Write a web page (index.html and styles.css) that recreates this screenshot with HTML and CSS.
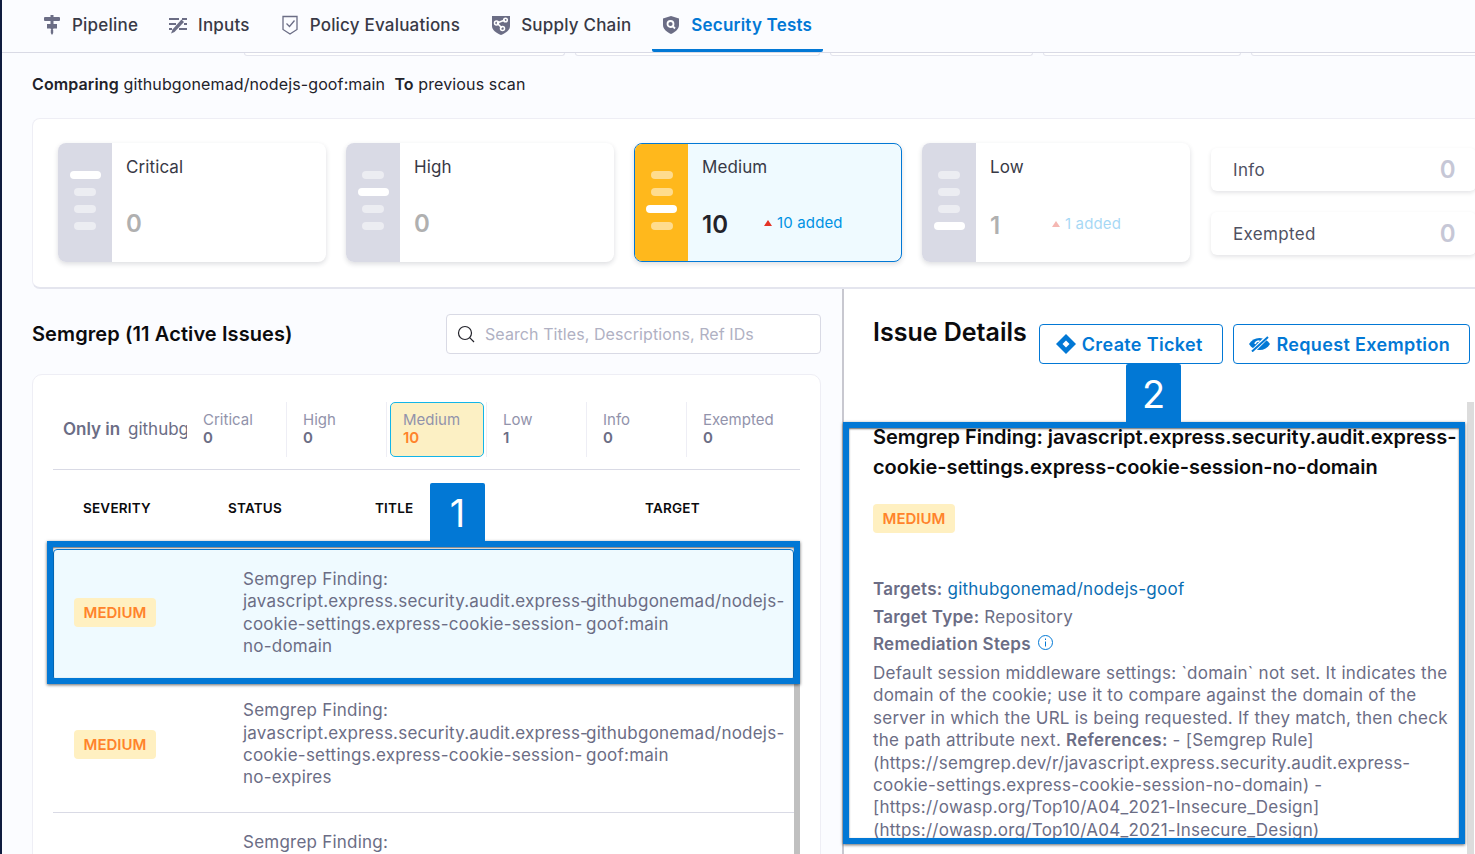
FILE: index.html
```html
<!DOCTYPE html>
<html lang="en">
<head>
<meta charset="UTF-8">
<meta name="viewport" content="width=device-width, initial-scale=1.0">
<link rel="stylesheet" href="styles.css">
<title>Security Tests</title>
</head>
<body>
<div class="page">

  <div class="nav">
    <a class="tab tab-pipeline">
      <svg width="16" height="20" viewBox="0 0 16 20"><path d="M6.500 0h3v2H15a1 1 0 0 1 1 1v2a1 1 0 0 1-1 1H9.500v3H13v4.500H9.500L8 16l-1.500-2.500H3V9h3.500V6H1a1 1 0 0 1-1-1V3a1 1 0 0 1 1-1h5.500z" fill="#6b6d85"/><path d="M6.800 15h2.400v3L8 20l-1.200-2z" fill="#6b6d85"/></svg>
      Pipeline
    </a>
    <a class="tab tab-inputs">
      <svg width="20" height="18" viewBox="0 0 20 18" fill="none" stroke="#6b6d85" stroke-width="2"><path d="M1 3h10M1 8h7M1 13h3"/><path d="M14 3h5M16 8h3M11 13h8"/><path d="M3 17.500l3.500-1.500L16 6l-2.500-2.500-8.800 9.800z" fill="#6b6d85" stroke="none"/></svg>
      Inputs
    </a>
    <a class="tab tab-policy">
      <svg width="16" height="20" viewBox="0 0 16 20" fill="none" stroke="#6b6d85" stroke-width="1.300"><path d="M1 1.500h14v13L8 19l-7-4.500z"/><path d="M4.500 8.500l3 3 5-6"/></svg>
      Policy Evaluations
    </a>
    <a class="tab tab-supply">
      <svg width="20" height="20" viewBox="0 0 20 20"><path d="M1 1h18v10c0 4-4 7-9 9-5-2-9-5-9-9z" fill="#6b6d85"/><g fill="none" stroke="#fff" stroke-width="1.500"><path d="M6 8l8-3M6 8l5 5"/><circle cx="5.500" cy="8" r="2"/><circle cx="14.500" cy="5" r="1.800"/><circle cx="11.500" cy="13.500" r="2"/></g></svg>
      Supply Chain
    </a>
    <a class="tab tab-active">
      <svg width="16" height="18" viewBox="0 0 16 18"><path d="M8 0l8 2.500V9c0 4-3.500 7-8 9-4.500-2-8-5-8-9V2.500z" fill="#6b6d85"/><circle cx="7.500" cy="8" r="3" fill="none" stroke="#fff" stroke-width="1.800"/><path d="M10 10.500l2 2" stroke="#fff" stroke-width="1.800"/></svg>
      Security Tests
    </a>
  </div>

  <div class="peek">
    <span style="width:321px"></span>
    <span style="width:245px"></span>
    <span style="width:203px"></span>
    <span style="width:198px"></span>
    <span style="width:240px"></span>
  </div>

  <p class="compare"><b>Comparing</b> githubgonemad/nodejs-goof:main &nbsp;<b>To</b> previous scan</p>

  <div class="summary">
    <div class="sev-card">
      <div class="stripe"><i class="on"></i><i></i><i></i><i></i></div>
      <div class="sev-body">
        <div class="sev-name">Critical</div>
        <div class="sev-count"><span class="num">0</span></div>
      </div>
    </div>
    <div class="sev-card">
      <div class="stripe"><i></i><i class="on"></i><i></i><i></i></div>
      <div class="sev-body">
        <div class="sev-name">High</div>
        <div class="sev-count"><span class="num">0</span></div>
      </div>
    </div>
    <div class="sev-card selected">
      <div class="stripe"><i></i><i></i><i class="on"></i><i></i></div>
      <div class="sev-body">
        <div class="sev-name">Medium</div>
        <div class="sev-count"><span class="num">10</span><span class="added"><em></em>10 added</span></div>
      </div>
    </div>
    <div class="sev-card">
      <div class="stripe"><i></i><i></i><i></i><i class="on"></i></div>
      <div class="sev-body">
        <div class="sev-name">Low</div>
        <div class="sev-count"><span class="num">1</span><span class="added faded"><em></em>1 added</span></div>
      </div>
    </div>
    <div class="mini-cards">
      <div class="mini"><span>Info</span><b>0</b></div>
      <div class="mini"><span>Exempted</span><b>0</b></div>
    </div>
  </div>

  <div class="split">
    <div class="left">
      <div class="left-head">
        <h2>Semgrep (11 Active Issues)</h2>
        <div class="search">
          <svg width="18" height="18" viewBox="0 0 18 18" fill="none" stroke="#22222a" stroke-width="1.200"><circle cx="8" cy="8" r="6.500"/><path d="M12.700 12.700L17 17"/></svg>
          <span>Search Titles, Descriptions, Ref IDs</span>
        </div>
      </div>

      <div class="issues">
        <div class="filters">
          <div class="only"><b>Only in</b> githubgonemad/nodejs-goof:main</div>
          <div class="cell"><span>Critical</span><b>0</b></div>
          <div class="cell"><span>High</span><b>0</b></div>
          <div class="cell active"><span>Medium</span><b>10</b></div>
          <div class="cell"><span>Low</span><b>1</b></div>
          <div class="cell"><span>Info</span><b>0</b></div>
          <div class="cell last"><span>Exempted</span><b>0</b></div>
        </div>

        <div class="thead">
          <span>Severity</span>
          <span>Status</span>
          <span>Title</span>
          <span>Target</span>
        </div>

        <div class="row current">
          <span class="badge">MEDIUM</span>
          <div>Semgrep Finding: javascript.express.security.audit.express-cookie-settings.express-cookie-session-no-domain</div>
          <div>githubgonemad/nodejs-goof:main</div>
        </div>
        <div class="row">
          <span class="badge">MEDIUM</span>
          <div>Semgrep Finding: javascript.express.security.audit.express-cookie-settings.express-cookie-session-no-expires</div>
          <div>githubgonemad/nodejs-goof:main</div>
        </div>
        <div class="row">
          <span class="badge">MEDIUM</span>
          <div>Semgrep Finding: javascript.express.security.audit.express-cookie-settings.express-cookie-session-no-httponly</div>
          <div>githubgonemad/nodejs-goof:main</div>
        </div>
      </div>
    </div>

    <div class="right">
      <div class="right-head">
        <h1>Issue Details</h1>
        <a class="btn btn-ticket">
          <svg width="20" height="20" viewBox="0 0 20 20"><path d="M10 0l10 10-10 10L0 10z" fill="#0278d5"/><path d="M10 6.500l3.500 3.500-3.500 3.500L6.500 10z" fill="#fff"/></svg>
          Create Ticket
        </a>
        <a class="btn btn-exempt">
          <svg width="21" height="16" viewBox="0 0 21 16"><path d="M0 8c2.500-4 6-6 10.500-6S18.500 4 21 8c-2.500 4-6 6-10.500 6S2.500 12 0 8z" fill="#0278d5"/><path d="M6 8c.5-2 2.300-3 4.500-3" stroke="#fff" stroke-width="1.600" fill="none"/><path d="M3 16L19 0" stroke="#fff" stroke-width="4"/><path d="M3 15.500L19 1" stroke="#0278d5" stroke-width="2"/></svg>
          Request Exemption
        </a>
      </div>
      <h3>Semgrep Finding: javascript.express.security.audit.express-cookie-settings.express-cookie-session-no-domain</h3>
      <span class="badge detail-badge">MEDIUM</span>
      <p class="meta first"><b>Targets:</b> <a>githubgonemad/nodejs-goof</a></p>
      <p class="meta"><b>Target Type:</b> Repository</p>
      <p class="meta steps"><b>Remediation Steps</b>
        <svg width="15" height="15" viewBox="0 0 15 15" fill="none" stroke="#0278d5"><circle cx="7.500" cy="7.500" r="7"/><path d="M7.500 6.500v5M7.500 3.500v1.500"/></svg>
      </p>
      <p class="remedy">Default session middleware settings: `domain` not set. It indicates the domain of the cookie; use it to compare against the domain of the server in which the URL is being requested. If they match, then check the path attribute next. <b>References:</b> - [Semgrep Rule] (https://semgrep.dev/r/javascript.express.security.audit.express-cookie-settings.express-cookie-session-no-domain) - [https://owasp.org/Top10/A04_2021-Insecure_Design] (https://owasp.org/Top10/A04_2021-Insecure_Design)</p>
    </div>
  </div>

  <!-- scrollbars and the numbered callouts sit on top of everything -->
  <div class="scroll scroll-left"></div>
  <div class="scroll scroll-right"></div>
  <div class="callout callout-one"></div>
  <div class="callout-num num-one">1</div>
  <div class="callout callout-two"></div>
  <div class="callout-num num-two">2</div>
</div>
</body>
</html>
```

FILE: styles.css
```css
* {
  box-sizing: border-box;
}

body {
  margin: 0;
  font-family: Inter, "Noto Sans", sans-serif;
  font-size: 16px;
  color: #22222a;
  background-color: #fbfcff;
}

.page {
  position: relative;
  height: 100vh;
  overflow: hidden;
  border-left: 2px solid #0f1c3f;
}

/* top tabs */
.nav {
  display: flex;
  height: 53px;
  border-bottom: 1px solid #d9dae5;
}

.tab {
  display: flex;
  align-items: center;
  gap: 12px;
  height: 52px;
  padding-bottom: 3px;
  font-size: 17px;
  font-weight: 500;
  letter-spacing: .2px;
  color: #383946;
}

.tab svg {
  flex: none;
}

.tab-pipeline {
  margin-left: 42px;
}

.tab-inputs {
  margin-left: 30px;
  gap: 10px;
}

.tab-policy {
  margin-left: 32px;
}

.tab-supply {
  margin-left: 31px;
  gap: 10px;
}

.tab-active {
  margin-left: 21px;
  padding-left: 11px;
  padding-right: 11px;
  color: #0278d5;
  font-weight: 600;
  border-bottom: 3px solid #0278d5;
  border-radius: 0 0 2px 2px;
  padding-bottom: 0;
}

.peek {
  display: flex;
  gap: 10px;
  height: 3px;
  margin-left: 242px;
}

.peek span {
  height: 3px;
  background: #fff;
  border: 1px solid #e4e5ee;
  border-top: none;
  border-radius: 0 0 5px 5px;
  flex: none;
}

.compare {
  margin: 17px 0 23px 30px;
  line-height: 22px;
  letter-spacing: .12px;
}

.compare b {
  font-weight: 600;
}

/* severity summary */
.summary {
  display: flex;
  gap: 20px;
  height: 171px;
  margin: 0 -20px 0 30px;
  padding: 24px 0 0 25px;
  background-color: #fff;
  border: 1px solid #eeeef5;
  border-bottom: 2px solid #e4e5ee;
  border-radius: 8px 0 0 8px;
}

.sev-card {
  display: flex;
  flex: none;
  width: 268px;
  height: 119px;
  background-color: #fff;
  border-radius: 8px;
  overflow: hidden;
  box-shadow: 0 2px 5px rgba(40, 41, 61, .16);
}

.stripe {
  display: flex;
  flex-direction: column;
  align-items: center;
  gap: 9px;
  width: 54px;
  padding-top: 28px;
  background-color: #d9dae5;
}

.stripe i {
  display: block;
  width: 22px;
  height: 8px;
  border-radius: 4px;
  background-color: rgba(255, 255, 255, .5);
}

.stripe i.on {
  width: 31px;
  background-color: #fff;
}

.sev-body {
  padding: 13px 0 0 14px;
  flex: 1;
}

.sev-name {
  font-size: 17px;
  line-height: 22px;
  letter-spacing: .1px;
  color: #383946;
}

.sev-count {
  display: flex;
  align-items: center;
  margin-top: 34px;
  line-height: 24px;
}

.num {
  width: 62px;
  font-size: 24px;
  font-weight: 600;
  color: #b0b0b0;
}

.added {
  margin-bottom: 4px;
  font-size: 15px;
  letter-spacing: .15px;
  color: #0092e4;
}

.added em {
  display: inline-block;
  width: 0;
  height: 0;
  margin-right: 5px;
  vertical-align: 2px;
  border-left: 4.500px solid transparent;
  border-right: 4.500px solid transparent;
  border-bottom: 6px solid #e43326;
}

.faded {
  opacity: .35;
}

.selected {
  background-color: #effaff;
  border: 1px solid #0278d5;
}

.selected .stripe {
  width: 53px;
  padding-top: 27px;
  background-color: #ffb81c;
}

.selected .sev-body {
  padding-top: 12px;
}

.selected .sev-count {
  margin-top: 33px;
}

.selected .num {
  color: #22222a;
}

.mini-cards {
  display: flex;
  flex-direction: column;
  gap: 21px;
  margin-left: 1px;
  padding-top: 5px;
}

.mini {
  display: flex;
  justify-content: space-between;
  align-items: center;
  width: 265px;
  height: 43px;
  padding: 0 20px 0 22px;
  font-size: 17px;
  letter-spacing: .35px;
  background-color: #fff;
  border-radius: 6px;
  box-shadow: 0 2px 4px rgba(40, 41, 61, .12);
  color: #4f5162;
}

.mini b {
  font-size: 24px;
  font-weight: 600;
  color: #c6c7d6;
}

/* lower split */
.split {
  display: flex;
  height: 572px;
}

.left {
  flex: none;
  width: 840px;
  padding: 25px 21px 0 30px;
}

.left-head {
  display: flex;
  justify-content: space-between;
  align-items: center;
}

.left-head h2 {
  margin: 0;
  font-size: 20px;
  font-weight: 600;
  letter-spacing: .1px;
  color: #0b0b0d;
}

.search {
  display: flex;
  align-items: center;
  gap: 10px;
  width: 375px;
  height: 40px;
  padding-left: 10px;
  letter-spacing: .08px;
  background-color: #fff;
  border: 1px solid #d9dae5;
  border-radius: 4px;
  color: #b0b1c3;
}

.issues {
  margin-top: 20px;
  padding: 27px 20px 0;
  background-color: #fff;
  border: 1px solid #eeeef5;
  border-radius: 10px;
}

.filters {
  display: flex;
  height: 68px;
  padding: 0 0 12px 10px;
  border-bottom: 1px solid #d9dae5;
}

.only {
  flex: none;
  width: 124px;
  overflow: hidden;
  white-space: nowrap;
  font-size: 17px;
  line-height: 55px;
  color: #6b6d85;
}

.only b {
  margin-right: 3px;
  font-weight: 600;
}

.cell {
  display: flex;
  flex-direction: column;
  justify-content: center;
  flex: none;
  width: 100px;
  padding: 0 0 2px 16px;
  font-size: 15px;
  line-height: 18px;
  border-right: 1px solid #eeeef5;
}

.cell span {
  color: #9293ab;
}

.cell b {
  font-weight: 600;
  color: #6b6d85;
}

.cell.last {
  border-right: none;
}

.cell.active {
  position: relative;
}

.cell.active::before {
  content: "";
  position: absolute;
  z-index: 0;
  top: 0;
  bottom: 0;
  left: 3px;
  right: 2px;
  background-color: #fcf0c4;
  border: 1px solid #12b5e8;
  border-radius: 5px;
}

.cell.active span,
.cell.active b {
  position: relative;
  color: #9293ab;
}

.cell.active b {
  color: #ff832b;
}

.thead {
  display: grid;
  grid-template-columns: 145px 147px 270px 1fr;
  align-items: center;
  height: 79px;
  padding: 0 0 3px 30px;
  font-size: 13.500px;
  font-weight: 600;
  letter-spacing: .2px;
  text-transform: uppercase;
  color: #0b0b0d;
}

.row {
  display: grid;
  grid-template-columns: 169px 343px 1fr;
  align-items: center;
  width: 741px;
  height: 132px;
  padding: 18px 0 23px 21px;
  font-size: 17px;
  line-height: 22.400px;
  letter-spacing: .23px;
  color: #6b6d85;
  border-bottom: 1px solid #d9dae5;
}

.row.current {
  padding: 17px 0 22px 20px;
  background-color: #effaff;
  border: 1px solid #0278d5;
  border-radius: 4px;
}

.badge {
  display: inline-block;
  width: 82px;
  height: 29px;
  font-size: 15px;
  font-weight: 600;
  line-height: 29px;
  letter-spacing: 0;
  text-align: center;
  color: #ff832b;
  background-color: #fff0c1;
  border-radius: 4px;
}

/* issue details */
.right {
  flex: 1;
  min-width: 0;
  padding: 28px 17px 0 29px;
  background-color: #fff;
  border-left: 2px solid #c8c8d0;
}

.right-head {
  display: flex;
  align-items: flex-start;
  height: 47px;
  white-space: nowrap;
}

.right-head h1 {
  margin: 0 12px 0 0;
  font-size: 25px;
  font-weight: 600;
  line-height: 30px;
  color: #0b0b0d;
}

.btn {
  display: flex;
  align-items: center;
  justify-content: center;
  gap: 6px;
  flex: none;
  height: 40px;
  margin-top: 7px;
  padding-right: 3px;
  font-size: 18px;
  font-weight: 600;
  letter-spacing: .35px;
  color: #0278d5;
  background-color: #fff;
  border: 1px solid #0278d5;
  border-radius: 4px;
}

.btn-ticket {
  width: 184px;
}

.btn-exempt {
  width: 237px;
  margin-left: 10px;
}

.right h3 {
  margin: 58px 0 22px;
  font-size: 20px;
  font-weight: 600;
  line-height: 30px;
  letter-spacing: -.03px;
  color: #0b0b0d;
}

.detail-badge {
  display: block;
}

.meta {
  margin: 0;
  font-size: 17px;
  line-height: 28px;
  letter-spacing: .25px;
  color: #6b6d85;
}

.meta.first {
  margin-top: 42px;
}

.meta b {
  font-weight: 600;
}

.meta a {
  color: #0a6eb4;
}

.meta.steps {
  line-height: 26px;
}

.meta.steps svg {
  margin-left: 2px;
}

.remedy {
  margin: 5px 0 0;
  font-size: 17px;
  line-height: 22.400px;
  letter-spacing: .25px;
  color: #6b6d85;
}

.remedy b {
  font-weight: 600;
}

.scroll {
  position: absolute;
  width: 6px;
  bottom: 0;
}

.scroll-left {
  left: 792px;
  top: 680px;
  background-color: #c0c0c0;
}

.scroll-right {
  left: 1465px;
  top: 402px;
  width: 7px;
  background-color: #dcdcdc;
}

.callout {
  position: absolute;
  border: 6px solid #0278d5;
  box-shadow: 0 1px 3px rgba(0, 0, 0, .6), inset 0 1px 2px rgba(0, 0, 0, .6);
}

.callout-one {
  left: 45px;
  top: 541px;
  width: 753px;
  height: 143px;
}

.callout-two {
  left: 841px;
  top: 422px;
  width: 622px;
  height: 422px;
}

.callout-num {
  position: absolute;
  width: 55px;
  height: 59px;
  padding-top: 7px;
  font-size: 38px;
  line-height: 46px;
  text-align: center;
  color: #fff;
  background-color: #0278d5;
  border-radius: 2px 2px 0 0;
}

.num-one {
  left: 428px;
  top: 483px;
}

.num-two {
  left: 1124px;
  top: 364px;
}
```
